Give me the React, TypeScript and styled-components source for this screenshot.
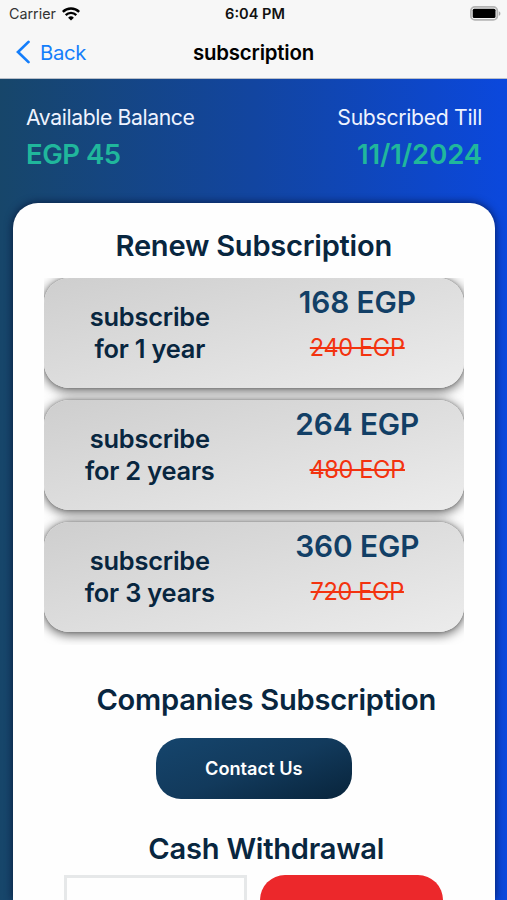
import React from 'react';
import styled, { createGlobalStyle } from 'styled-components';

type Plan = {
  id: number;
  period: string;
  price: string;
  oldPrice: string;
};

const plans: Plan[] = [
  { id: 1, period: 'for 1 year', price: '168 EGP', oldPrice: '240 EGP' },
  { id: 2, period: 'for 2 years', price: '264 EGP', oldPrice: '480 EGP' },
  { id: 3, period: 'for 3 years', price: '360 EGP', oldPrice: '720 EGP' },
];

const WifiIcon = () => (
  <svg width="18" height="14" viewBox="0 0 18 14" fill="none">
    <path d="M.8 4.900a11.600 11.600 0 0 1 16.400 0" stroke="#000" strokeWidth="2.500" />
    <path d="M3.700 8.100a7.500 7.500 0 0 1 10.600 0" stroke="#000" strokeWidth="2.300" />
    <path d="M9 13.600 6.100 10.700a4.100 4.100 0 0 1 5.800 0z" fill="#000" />
  </svg>
);

const BatteryIcon = () => (
  <svg width="31" height="15" viewBox="0 0 31 15" fill="none">
    <rect x="0.9" y="0.9" width="26.4" height="13" rx="4" fill="#f7f7f7" stroke="#b4b4b4" strokeWidth="1.8" />
    <rect x="2.7" y="2.7" width="22.8" height="9.4" rx="1.5" fill="#000" />
    <path d="M28.800 5.200v4.600c1-.4 1.600-1.300 1.600-2.300s-.6-1.900-1.600-2.300z" fill="#a8a8a8" />
  </svg>
);

const BackIcon = () => (
  <svg width="15" height="24" viewBox="0 0 15 24" fill="none">
    <path d="M13.500 1.900 3 12l10.500 10.100" stroke="#147efb" strokeWidth="2.700" strokeLinecap="round" />
  </svg>
);

const App = () => (
  <Screen>
    <GlobalStyle />
    <Header>
      <StatusBar>
        <Carrier>
          Carrier
          <WifiIcon />
        </Carrier>
        <Clock>6:04 PM</Clock>
        <Battery>
          <BatteryIcon />
        </Battery>
      </StatusBar>
      <NavBar>
        <BackButton>
          <BackIcon />
          Back
        </BackButton>
        <NavTitle>subscription</NavTitle>
      </NavBar>
    </Header>
    <Summary>
      <SummaryItem>
        <SummaryLabel $spacing={-0.4}>Available Balance</SummaryLabel>
        <SummaryValue $spacing={-0.5}>EGP 45</SummaryValue>
      </SummaryItem>
      <SummaryItem $right>
        <SummaryLabel $spacing={-0.3}>Subscribed Till</SummaryLabel>
        <SummaryValue $spacing={-0.1}>11/1/2024</SummaryValue>
      </SummaryItem>
    </Summary>
    <Panel>
      <Heading>Renew Subscription</Heading>
      <PlanList>
        {plans.map((plan) => (
          <PlanCard key={plan.id}>
            <PlanName>
              subscribe
              <br />
              {plan.period}
            </PlanName>
            <PlanPrices>
              <Price>{plan.price}</Price>
              <OldPrice>{plan.oldPrice}</OldPrice>
            </PlanPrices>
          </PlanCard>
        ))}
      </PlanList>
      <CompaniesHeading>Companies Subscription</CompaniesHeading>
      <ContactButton>Contact Us</ContactButton>
      <CashHeading>Cash Withdrawal</CashHeading>
      <CashRow>
        <AmountInput aria-label="amount" />
        <WithdrawButton aria-label="withdraw" />
      </CashRow>
    </Panel>
  </Screen>
);

const GlobalStyle = createGlobalStyle`
  body {
    margin: 0;
    overflow: hidden;
  }
  * {
    box-sizing: border-box;
  }
  button {
    font: inherit;
    border: 0;
    padding: 0;
  }
`;

const Screen = styled.div`
  display: flex;
  flex-direction: column;
  width: 507px;
  height: 900px;
  overflow: hidden;
  font-family: Inter, 'Liberation Sans', sans-serif;
  background: linear-gradient(90deg, #17466a 0%, #1245a0 50%, #0b48dd 100%);
`;

const Header = styled.header`
  flex: none;
  height: 79px;
  background: #f7f7f7;
  border-bottom: 1px solid #b9bfc9;
`;

const StatusBar = styled.div`
  display: grid;
  grid-template-columns: 1fr auto 1fr;
  align-items: center;
  height: 27px;
  padding: 0 6px 0 9px;
  font-size: 14.6px;
  color: #111;
`;

const Carrier = styled.div`
  display: flex;
  align-items: center;
  gap: 6px;
  font-size: 14.3px;
  color: #333;
`;

const Clock = styled.div`
  font-weight: 600;
`;

const Battery = styled.div`
  display: flex;
  justify-content: flex-end;
  padding-bottom: 1px;
`;

const NavBar = styled.div`
  display: grid;
  grid-template-columns: 1fr auto 1fr;
  align-items: center;
  height: 50px;
  padding: 0 15px;
`;

const BackButton = styled.button`
  display: flex;
  align-items: center;
  gap: 10px;
  background: none;
  color: #147efb;
  font-size: 20.3px;
  letter-spacing: -0.3px;
`;

const NavTitle = styled.div`
  font-size: 20.4px;
  font-weight: 600;
  letter-spacing: -0.2px;
  color: #000;
`;

const Summary = styled.section`
  display: flex;
  justify-content: space-between;
  flex: none;
  height: 124px;
  padding: 23px 25px 0 26px;
`;

const SummaryItem = styled.div<{ $right?: boolean }>`
  display: flex;
  flex-direction: column;
  align-items: ${({ $right }) => ($right ? 'flex-end' : 'flex-start')};
`;

const SummaryLabel = styled.div<{ $spacing: number }>`
  font-size: 21.2px;
  line-height: 30px;
  letter-spacing: ${({ $spacing }) => $spacing}px;
  color: #eef3ff;
`;

const SummaryValue = styled.div<{ $spacing: number }>`
  margin-top: 4px;
  font-size: 27.5px;
  font-weight: 560;
  line-height: 36px;
  letter-spacing: ${({ $spacing }) => $spacing}px;
  color: #20b79c;
`;

const Panel = styled.main`
  display: flex;
  flex-direction: column;
  align-items: center;
  flex: 1;
  min-height: 0;
  margin: 0 12.5px 0 13px;
  border-radius: 25px 25px 0 0;
  background: #fefefe;
  box-shadow: 0 0 8px rgba(0, 10, 40, 0.75);
`;

const Heading = styled.h2`
  flex: none;
  margin: 25px 0 0;
  font-size: 29.1px;
  font-weight: 570;
  line-height: 36px;
  letter-spacing: -0.25px;
  color: #08263f;
`;

const CompaniesHeading = styled(Heading)`
  margin: 37px 0 0 25px;
`;

const CashHeading = styled(Heading)`
  margin: 32px 0 0 25px;
`;

const PlanList = styled.div`
  display: flex;
  flex-direction: column;
  flex: none;
  gap: 12px;
  width: 420px;
  height: 367.5px;
  margin: 13.5px 0 0;
  overflow: hidden;
`;

const PlanCard = styled.div`
  display: flex;
  flex: none;
  height: 110px;
  border-radius: 25px;
  background: linear-gradient(165deg, #cecece 0%, #ececec 100%);
  box-shadow:
    0 0 3px rgba(0, 0, 0, 0.25),
    0 2px 11px 1px rgba(0, 0, 0, 0.6);
`;

const PlanName = styled.div`
  width: 212px;
  padding-top: 23.5px;
  font-size: 25.4px;
  font-weight: 570;
  line-height: 32px;
  letter-spacing: -0.2px;
  text-align: center;
  color: #08263f;
`;

const PlanPrices = styled.div`
  display: flex;
  flex-direction: column;
  align-items: center;
  width: 203px;
  padding-top: 5.5px;
`;

const Price = styled.div`
  font-size: 29.8px;
  font-weight: 570;
  line-height: 38px;
  letter-spacing: -0.1px;
  color: #123f66;
`;

const OldPrice = styled.div`
  margin-top: 12px;
  font-size: 23.6px;
  line-height: 30px;
  letter-spacing: -0.4px;
  text-decoration: line-through;
  text-decoration-thickness: 2px;
  color: #f3330f;
`;

const ContactButton = styled.button`
  flex: none;
  width: 196px;
  height: 61px;
  margin-top: 20px;
  padding-bottom: 1px;
  border-radius: 25px;
  background: linear-gradient(160deg, #15456d 0%, #123a5c 50%, #08243b 100%);
  color: #fff;
  font-size: 18.2px;
  font-weight: 570;
`;

const CashRow = styled.div`
  display: flex;
  flex: none;
  gap: 13px;
  margin-top: 8px;
`;

const AmountInput = styled.input`
  width: 183px;
  height: 61px;
  border: 3px solid #e6e8e9;
  background: #fefefe;
`;

const WithdrawButton = styled.button`
  width: 183px;
  height: 61px;
  border-radius: 25px;
  background: #ec282b;
`;

export default App;
